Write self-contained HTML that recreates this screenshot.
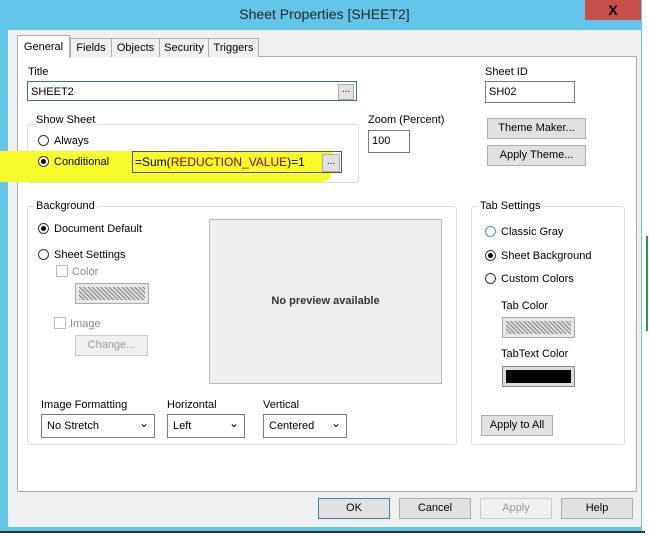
<!DOCTYPE html>
<html><head><style>
body{margin:0;width:649px;height:536px;background:#fff;position:relative;overflow:hidden;font-family:"Liberation Sans",sans-serif;font-size:11px;color:#000}
.a{position:absolute}
.frame{left:0;top:0;width:642px;height:531px;background:#63c6e8}
.body{left:8px;top:30px;width:633px;height:497px;background:#f0f0f0}
.title{left:0;top:6px;width:649px;text-align:center;font-size:14px;color:#222}
.close{left:585px;top:0;width:56px;height:20px;background:#c7504a;color:#000;text-align:center;font-weight:bold;font-size:14px;line-height:20px}
.tab{top:38px;height:18px;border:1px solid #adadad;border-bottom:none;background:#f0f0f0;line-height:18px;text-align:center}
.panel{left:17px;top:56px;width:618px;height:434px;border:1px solid #adadad;background:#fff}
.inp{background:#fff;border:1px solid #7a7a7a;height:20px;line-height:20px;padding-left:3px;box-sizing:border-box}
.grp{border:1px solid #dcdcdc;border-radius:3px}
.lg{background:#fff;padding:0 2px}
.btn{background:#e1e1e1;border:1px solid #adadad;text-align:center;box-sizing:border-box}
.rad{width:11px;height:11px;border:1px solid #333;border-radius:50%;background:#fff;box-sizing:border-box}
.rad.on::after{content:"";position:absolute;left:2px;top:2px;width:5px;height:5px;border-radius:50%;background:#000}
.hatch{background:repeating-linear-gradient(45deg,#888 0 1px,#ddd 1px 3px)}
.dd{background:#fff;border:1px solid #7a7a7a;height:22px;line-height:20px;padding-left:5px;box-sizing:border-box}
.dd::after{content:"⌄";position:absolute;right:5px;top:-3px;font-size:12px}
</style></head><body>
<div class="a frame"></div>
<div class="a body"></div>
<div class="a title">Sheet Properties [SHEET2]</div>
<div class="a close">X</div>
<div class="a" style="left:646px;top:236px;width:2px;height:95px;background:#2a9a3a"></div>
<div class="a" style="left:0;top:531px;width:645px;height:2px;background:#333"></div>

<div class="a panel"></div>
<div class="a tab" style="left:70px;width:40px">Fields</div>
<div class="a tab" style="left:111px;width:47px">Objects</div>
<div class="a tab" style="left:159px;width:48px">Security</div>
<div class="a tab" style="left:208px;width:49px">Triggers</div>
<div class="a tab" style="left:17px;top:35px;height:22px;width:51px;background:#fff;line-height:22px">General</div>

<div class="a" style="left:28px;top:66px">Title</div>
<div class="a inp" style="left:27px;top:81px;width:330px;border-color:#3c6e9a">SHEET2</div>
<div class="a btn" style="left:338px;top:84px;width:16px;height:16px;line-height:10px;font-size:10px">...</div>
<div class="a" style="left:485px;top:66px">Sheet ID</div>
<div class="a inp" style="left:485px;top:81px;width:90px;height:22px">SH02</div>

<div class="a grp" style="left:27px;top:124px;width:330px;height:57px"></div>
<div class="a lg" style="left:34px;top:114px">Show Sheet</div>
<div class="a rad" style="left:38px;top:135px"></div><div class="a" style="left:54px;top:135px">Always</div>
<div class="a" style="left:0;top:151px;width:333px;height:31px;background:#f8fb2a;border-radius:0 0 12px 0"></div>
<div class="a rad on" style="left:38px;top:156px"></div><div class="a" style="left:54px;top:156px">Conditional</div>
<div class="a" style="left:132px;top:151px;width:210px;height:22px;border:1px solid #555;box-sizing:border-box"></div>
<div class="a" style="left:135px;top:155px;color:#000;font-size:12px">=Sum(<span style="color:#8b0000">REDUCTION_VALUE</span>)=1</div>
<div class="a btn" style="left:322px;top:154px;width:18px;height:18px;line-height:14px;font-size:10px">...</div>

<div class="a" style="left:368px;top:114px">Zoom (Percent)</div>
<div class="a inp" style="left:368px;top:130px;width:42px;height:23px">100</div>
<div class="a btn" style="left:487px;top:118px;width:99px;height:21px;line-height:19px">Theme Maker...</div>
<div class="a btn" style="left:487px;top:145px;width:99px;height:21px;line-height:19px">Apply Theme...</div>

<div class="a grp" style="left:27px;top:206px;width:428px;height:237px"></div>
<div class="a lg" style="left:34px;top:200px">Background</div>
<div class="a rad on" style="left:38px;top:223px"></div><div class="a" style="left:54px;top:223px">Document Default</div>
<div class="a rad" style="left:38px;top:249px"></div><div class="a" style="left:54px;top:249px">Sheet Settings</div>
<div class="a" style="left:56px;top:265px;width:12px;height:12px;border:1px solid #bbb;box-sizing:border-box"></div><div class="a" style="left:72px;top:266px;color:#888">Color</div>
<div class="a" style="left:75px;top:283px;width:74px;height:21px;border:1px solid #aaa;box-sizing:border-box;padding:3px;background:#e8e8e8"><div class="hatch" style="width:100%;height:100%"></div></div>
<div class="a" style="left:54px;top:317px;width:12px;height:12px;border:1px solid #bbb;box-sizing:border-box"></div><div class="a" style="left:70px;top:318px;color:#888">Image</div>
<div class="a btn" style="left:75px;top:335px;width:73px;height:21px;line-height:19px;color:#999;background:#f0f0f0;border-color:#ccc">Change...</div>
<div class="a" style="left:209px;top:219px;width:233px;height:165px;background:#efefef;border:1px solid #bbb;box-sizing:border-box;text-align:center;line-height:163px;font-weight:bold;font-size:11px;color:#333">No preview available</div>

<div class="a" style="left:41px;top:399px">Image Formatting</div>
<div class="a dd" style="left:41px;top:414px;width:114px;height:24px;line-height:22px">No Stretch</div>
<div class="a" style="left:167px;top:399px">Horizontal</div>
<div class="a dd" style="left:167px;top:414px;width:78px;height:24px;line-height:22px">Left</div>
<div class="a" style="left:263px;top:399px">Vertical</div>
<div class="a dd" style="left:263px;top:414px;width:84px;height:24px;line-height:22px">Centered</div>

<div class="a grp" style="left:471px;top:206px;width:152px;height:237px"></div>
<div class="a lg" style="left:478px;top:200px">Tab Settings</div>
<div class="a rad" style="left:485px;top:226px;border-color:#3a9ad9"></div><div class="a" style="left:501px;top:226px">Classic Gray</div>
<div class="a rad on" style="left:485px;top:250px"></div><div class="a" style="left:501px;top:250px">Sheet Background</div>
<div class="a rad" style="left:485px;top:273px"></div><div class="a" style="left:501px;top:273px">Custom Colors</div>
<div class="a" style="left:501px;top:300px">Tab Color</div>
<div class="a" style="left:502px;top:317px;width:73px;height:21px;border:1px solid #aaa;box-sizing:border-box;padding:3px;background:#e8e8e8"><div class="hatch" style="width:100%;height:100%"></div></div>
<div class="a" style="left:501px;top:348px">TabText Color</div>
<div class="a" style="left:502px;top:366px;width:73px;height:21px;border:1px solid #888;box-sizing:border-box;padding:3px;background:#ddd"><div style="width:100%;height:100%;background:#000"></div></div>
<div class="a btn" style="left:481px;top:415px;width:72px;height:21px;line-height:19px">Apply to All</div>

<div class="a btn" style="left:318px;top:498px;width:72px;height:21px;line-height:19px;border-color:#3c7fb1">OK</div>
<div class="a btn" style="left:399px;top:498px;width:72px;height:21px;line-height:19px">Cancel</div>
<div class="a btn" style="left:480px;top:498px;width:72px;height:21px;line-height:19px;color:#999;background:#f0f0f0;border-color:#ccc">Apply</div>
<div class="a btn" style="left:561px;top:498px;width:72px;height:21px;line-height:19px">Help</div>
</body></html>
